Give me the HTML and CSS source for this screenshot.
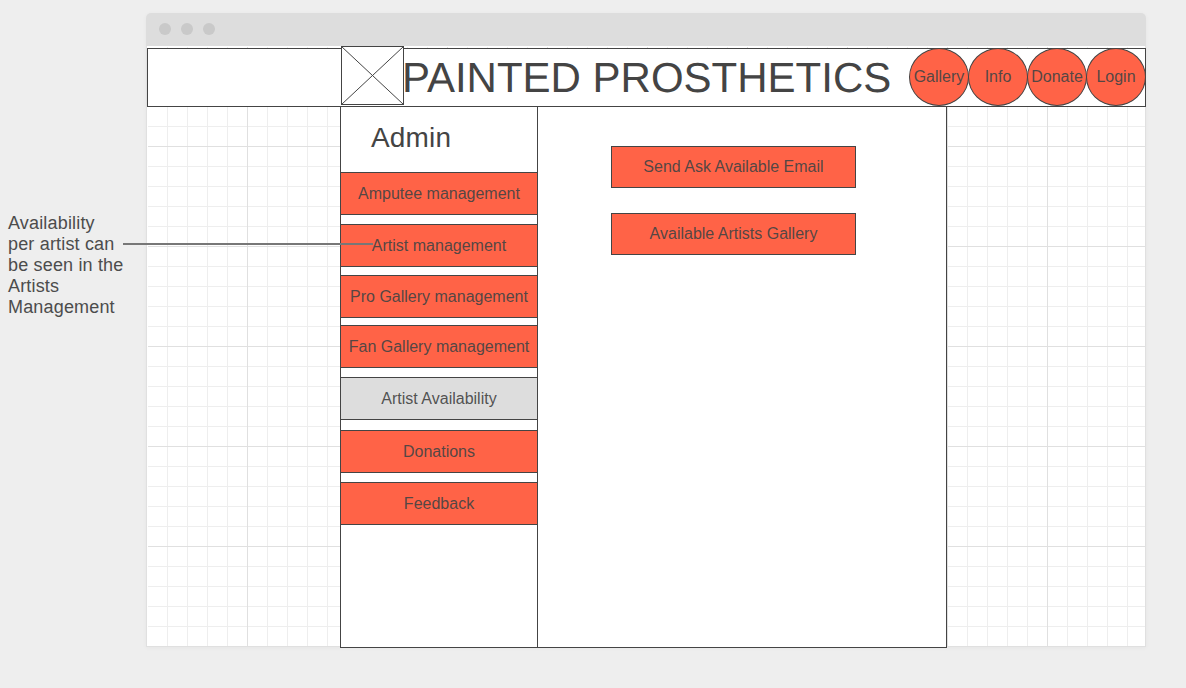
FILE: index.html
```
<!DOCTYPE html>
<html lang="en">
<head>
<meta charset="utf-8">
<title>Painted Prosthetics – Admin</title>
<link rel="stylesheet" href="styles.css">
</head>
<body>
<div class="board">
  <aside class="note">
    Availability<br>per artist can<br>be seen in the<br>Artists<br>Management
    <span class="connector"></span>
  </aside>
  <div class="window">
    <div class="titlebar"><i class="dot"></i><i class="dot"></i><i class="dot"></i></div>
    <div class="canvas">
      <header class="header">
        <svg class="logo" width="63" height="59" viewBox="0 0 63 59">
          <rect x=".5" y=".5" width="62" height="58"/>
          <path d="M.5 .5L62.5 58.5M62.5 .5L.5 58.5"/>
        </svg>
        <h1 class="title">PAINTED PROSTHETICS</h1>
        <nav class="nav">
          <a class="circle">Gallery</a>
          <a class="circle">Info</a>
          <a class="circle">Donate</a>
          <a class="circle">Login</a>
        </nav>
      </header>
      <div class="page">
        <aside class="sidebar">
          <h2 class="heading">Admin</h2>
          <a class="item">Amputee management</a>
          <a class="item item-artist">Artist management</a>
          <a class="item item-pro">Pro Gallery management</a>
          <a class="item item-fan">Fan Gallery management</a>
          <a class="item item-active">Artist Availability</a>
          <a class="item item-donations">Donations</a>
          <a class="item">Feedback</a>
        </aside>
        <main class="content">
          <button class="action">Send Ask Available Email</button>
          <button class="action">Available Artists Gallery</button>
        </main>
      </div>
    </div>
  </div>
</div>
</body>
</html>
```
FILE: styles.css
```
* { box-sizing: border-box; }

body {
  margin: 0;
  background: #eee;
  color: #444;
  font: 16px/20px "Liberation Sans", Arial, sans-serif;
}

.board {
  display: grid;
  grid-template-columns: 146px 1000px;
  height: 688px;
  padding-top: 13px;
  overflow: hidden;
}

.note {
  position: relative;
  padding: 200px 0 0 8px;
  color: #4c4c4c;
  font-size: 18px;
  line-height: 21px;
  letter-spacing: .17px;
  white-space: nowrap;
}

.connector {
  position: absolute;
  z-index: 2;
  left: 123px;
  top: 230px;
  width: 250px;
  height: 2px;
  background: #777;
}

.window {
  height: 634px;
  border-radius: 5px 5px 0 0;
  box-shadow: 0 1px 5px rgba(0, 0, 0, .04);
}

.titlebar {
  display: flex;
  align-items: center;
  gap: 10px;
  height: 33px;
  padding: 0 0 1px 13px;
  border-radius: 5px 5px 0 0;
  background: #ddd;
}

.dot {
  width: 12px;
  height: 12px;
  border-radius: 50%;
  background: #c9c9c9;
}

.canvas {
  height: 601px;
  padding-top: 2px;
  border: solid #e0e0e0;
  border-width: 0 1px 1px;
  background-color: #fff;
  background-image:
    linear-gradient(#fff, #fff),
    linear-gradient(#fff, #fff),
    linear-gradient(90deg, #e0e0e0 1px, transparent 1px),
    linear-gradient(#e0e0e0 1px, transparent 1px),
    linear-gradient(90deg, #eee 1px, transparent 1px),
    linear-gradient(#eee 1px, transparent 1px);
  background-size: 1px 100%, 100% 1px, 100px 100px, 100px 100px, 20px 20px, 20px 20px;
  background-repeat: no-repeat, no-repeat, repeat, repeat, repeat, repeat;
}

.header {
  display: flex;
  width: 999px;
  height: 59px;
  padding-left: 193px;
  border: 1px solid #444;
  background: #fff;
}

.logo {
  flex: none;
  margin-top: -3px;
  fill: #fff;
  stroke: #444;
}

.title {
  width: 505px;
  margin: 0;
  font-size: 42px;
  font-weight: 400;
  line-height: 58px;
  white-space: nowrap;
  text-indent: -2px;
  text-rendering: geometricPrecision;
}

.nav {
  display: flex;
  margin-top: -1px;
}

.circle {
  display: flex;
  flex: none;
  align-items: center;
  justify-content: center;
  width: 60px;
  height: 58px;
  margin-right: -1px;
  border: 1px solid #444;
  border-radius: 50%;
  background: #ff6347;
  color: rgba(68, 68, 68, .92);
}

.page {
  display: flex;
  width: 607px;
  height: 542px;
  margin: -1px 0 0 193px;
  border: 1px solid #444;
  background: #fff;
}

.sidebar {
  display: flex;
  flex-direction: column;
  width: 197px;
  border-right: 1px solid #444;
}

.heading {
  height: 65px;
  margin: 0;
  padding: 15px 0 0 30px;
  font-size: 28px;
  font-weight: 400;
  line-height: 32px;
  letter-spacing: .15px;
}

.item {
  display: flex;
  align-items: center;
  justify-content: center;
  height: 43px;
  margin-bottom: 9px;
  border: solid #444;
  border-width: 1px 0;
  background: #ff6347;
  color: rgba(68, 68, 68, .92);
  white-space: nowrap;
}

.item-artist { margin-bottom: 8px; }
.item-pro { margin-bottom: 7px; }
.item-active { margin-bottom: 10px; background: #ddd; }

.content {
  display: flex;
  flex-direction: column;
  gap: 25px;
  padding: 39px 0 0 73px;
}

.action {
  width: 245px;
  height: 42px;
  padding: 0;
  border: 1px solid #444;
  background: #ff6347;
  color: rgba(68, 68, 68, .92);
  font: inherit;
}
```
